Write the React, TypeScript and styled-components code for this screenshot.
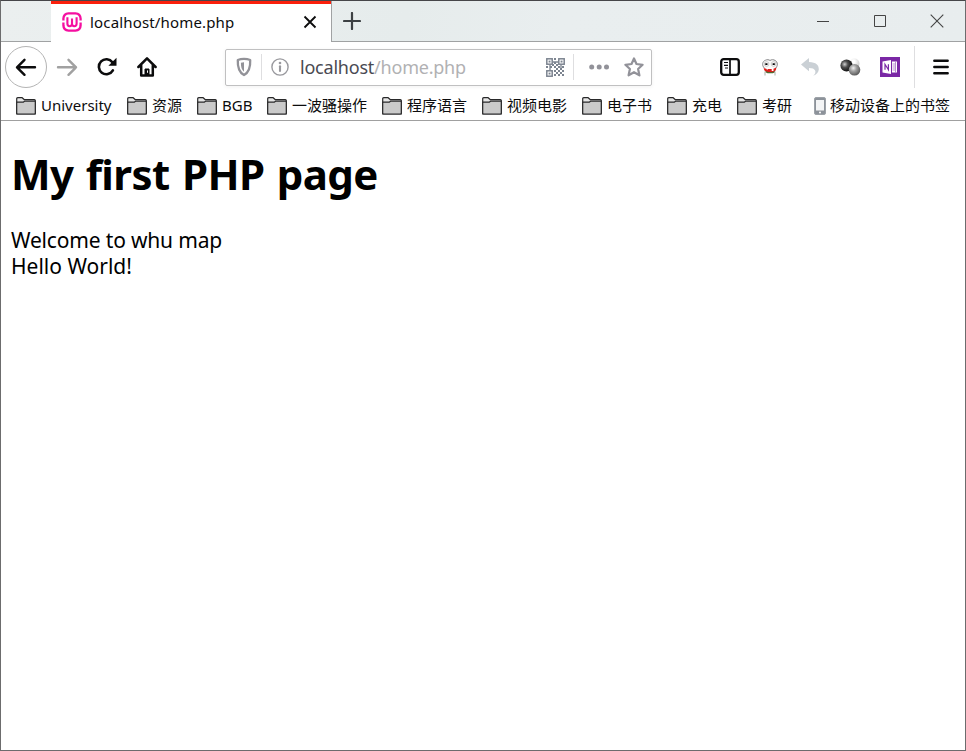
import React from "react";
import styled, { createGlobalStyle } from "styled-components";

const GlobalStyle = createGlobalStyle`
  * { box-sizing: border-box; }
  body {
    margin: 0;
    background: #fff;
    font-family: "Noto Sans", "Noto Sans CJK SC", sans-serif;
    overflow: hidden;
  }
  svg { display: block; flex: none; }
`;

const BrowserWindow = styled.div`
  width: 966px;
  height: 751px;
  display: flex;
  flex-direction: column;
  background: #fff;
  border: 1px solid #6c6c6d;
  border-top-color: #464649;
`;

const TitleBar = styled.header`
  height: 41px;
  flex: none;
  display: flex;
  background: linear-gradient(100deg, #ebefef 0%, #e6ecec 42%, #e9eeef 58%, #e8edee 100%);
`;

const TabGap = styled.div`
  width: 50px;
  border-bottom: 1px solid #a0a2a3;
`;

const Tab = styled.div`
  width: 280px;
  display: flex;
  align-items: center;
  padding: 0 12px 3px 11px;
  background: #fff;
  border-top: 3px solid #fa200c;
`;

const TabTitle = styled.span`
  width: 213px;
  flex: none;
  margin-left: 8px;
  font-size: 15px;
  line-height: 20px;
  letter-spacing: 0.16px;
  color: #0c0c0d;
  white-space: nowrap;
`;

const TabStripRest = styled.div`
  flex: 1;
  display: flex;
  align-items: center;
  justify-content: space-between;
  padding-left: 11px;
  border-bottom: 1px solid #a0a2a3;
  border-left: 1px solid #a0a2a3;
`;

const WindowControls = styled.div`
  display: flex;
  height: 100%;
`;

const WindowButton = styled.div`
  width: 57px;
  display: flex;
  align-items: center;
  justify-content: center;
`;

const NavBar = styled.nav`
  height: 50px;
  flex: none;
  display: flex;
  align-items: center;
  padding-left: 4px;
`;

const BackButton = styled.div`
  width: 42px;
  height: 42px;
  display: grid;
  place-items: center;
  border: 1px solid #b4b4b4;
  border-radius: 50%;
`;

const NavButton = styled.div`
  width: 40px;
  height: 40px;
  display: grid;
  place-items: center;
`;

const AddressBar = styled.div`
  width: 427px;
  height: 37px;
  margin: 0 58px;
  display: flex;
  align-items: center;
  padding-left: 8px;
  border: 1px solid #c0c0c1;
  border-radius: 2px;
  box-shadow: 0 1px 4px rgba(0, 0, 0, 0.06);
`;

const Divider = styled.i<{ $height: number; $left: number; $right: number }>`
  width: 1px;
  flex: none;
  height: ${(p) => p.$height}px;
  margin: 0 ${(p) => p.$right}px 0 ${(p) => p.$left}px;
  background: #dedee0;
`;

const PageActions = styled.div`
  display: flex;
  align-items: center;
  gap: 15px;
`;

const Address = styled.span`
  width: 246px;
  flex: none;
  margin-left: 11px;
  font-size: 18px;
  line-height: 24px;
  letter-spacing: -0.22px;
  color: #b1b1b3;
  white-space: nowrap;

  b { font-weight: 400; color: #4a4a52; }
`;

const BookmarksBar = styled.div`
  height: 29px;
  flex: none;
  display: flex;
  align-items: center;
  padding-left: 15px;
  border-bottom: 1px solid #a0a0a0;
`;

const Bookmark = styled.div<{ $width: number; $gap?: number }>`
  width: ${(p) => p.$width}px;
  height: 20px;
  flex: none;
  display: flex;
  align-items: center;
  gap: ${(p) => p.$gap ?? 5}px;
  color: #0c0c0d;

  svg { margin-bottom: 1px; }
`;

const BookmarkLabel = styled.span`
  padding-bottom: 2px;
  font-size: 15px;
  line-height: 20px;
  white-space: nowrap;
`;

const Page = styled.main`
  padding: 24px 10px;
  color: #000;
`;

const Heading = styled.h1`
  margin: 0;
  font-size: 42px;
  line-height: 58px;
  font-weight: 700;
  letter-spacing: -0.6px;
  word-spacing: 2px;
`;

const Paragraph = styled.p<{ $spacing?: number }>`
  margin: 0;
  font-size: 21px;
  line-height: 26px;
  letter-spacing: ${(p) => p.$spacing ?? 0}px;

  ${Heading} + & { margin-top: 24px; }
`;

const WampLogo = () => (
  <svg width="20" height="20" viewBox="0 0 20 20" fill="none" stroke="#f50fa0">
    <path d="M1.4 8.4V6.5Q1.6 1.6 6.6 1.3h6.8q5 .3 5.2 5.2v1.9M1.4 10.6v2.8q.2 5 5.2 5.3h6.8q5-.3 5.2-5.3v-2.8" strokeWidth="2.3" />
    <path d="M5.4 5.2v6.6q0 2.4 2.3 2.4T10 11.8V6.5M10 11.8q0 2.4 2.3 2.4t2.3-2.4V5.2" strokeWidth="2.1" />
  </svg>
);

const CloseTab = () => (
  <svg width="14" height="14" viewBox="0 0 14 14" stroke="#0c0c0d" strokeWidth="1.8">
    <path d="M1.5 1.5l11 11M12.5 1.5l-11 11" />
  </svg>
);

const Plus = () => (
  <svg width="18" height="18" viewBox="0 0 18 18" stroke="#3c4043" strokeWidth="2.2" strokeLinecap="round">
    <path d="M9 1v16M1 9h16" />
  </svg>
);

const Arrow = ({ forward = false }: { forward?: boolean }) => (
  <svg width="22" height="20" viewBox="0 0 22 20" fill="none" stroke={forward ? "#a1a1a1" : "#0c0c0d"} strokeWidth="2.4" strokeLinecap="round" strokeLinejoin="round">
    <path d={forward ? "M2 10.3h18M12.5 2.8l7.5 7.5-7.5 7.5" : "M20 10.3H2.5M9.5 2.8L2 10.3l7.5 7.5"} />
  </svg>
);

const Reload = () => (
  <svg width="20" height="20" viewBox="0 0 20 20" fill="none" stroke="#0c0c0d" strokeWidth="2.6">
    <path d="M15.9 13.4A7.5 7.5 0 1 1 15.4 5.3" strokeLinecap="round" />
    <path d="M19.5 .7v8.1h-8.1z" fill="#0c0c0d" stroke="none" />
  </svg>
);

const Home = () => (
  <svg width="20" height="20" viewBox="0 0 20 20" fill="none" stroke="#0c0c0d" strokeWidth="2.5" strokeLinecap="round" strokeLinejoin="round">
    <path d="M1.4 10L10 1.4l8.6 8.6M4.2 8.5v10.1h11.6V8.5" />
    <path d="M8 18v-6h4v6z" fill="#0c0c0d" strokeWidth="1" />
    <path d="M10.5 13.8v1.6" stroke="#fff" strokeWidth="1" />
  </svg>
);

const Shield = () => (
  <svg width="20" height="20" viewBox="0 0 20 20">
    <path d="M10 1.9q3.4 0 6.2 1.1c.3 5.7-.1 11.6-6.2 15.1C3.9 14.6 3.5 8.7 3.8 3Q6.6 1.9 10 1.9z" fill="none" stroke="#929298" strokeWidth="2.3" strokeLinejoin="round" />
    <path d="M10 5.3v9.5C7.4 12.7 6.9 9.6 6.9 5.8Q8.3 5.3 10 5.3z" fill="#929298" />
  </svg>
);

const Info = () => (
  <svg width="18" height="18" viewBox="0 0 18 18" fill="none" stroke="#99999e">
    <circle cx="9" cy="9" r="8.1" strokeWidth="1.4" />
    <path d="M9 8.3v4.7" strokeWidth="2.1" strokeLinecap="round" />
    <circle cx="9" cy="5" r="1.3" fill="#99999e" stroke="none" />
  </svg>
);

const qrCells: [number, number][] = [
  [9, 1], [9, 5], [1, 9], [5, 9], [9, 9], [13, 9], [17, 9], [11, 7], [7, 7],
  [11, 11], [15, 11], [9, 13], [13, 13], [17, 13], [11, 15], [15, 15], [13, 17], [17, 17], [9, 17],
];

const QrCode = () => (
  <svg width="19" height="19" viewBox="0 0 19 19">
    {[[0, 0], [12, 0], [0, 12]].map(([x, y]) => (
      <g key={`${x}-${y}`}>
        <rect x={x + 0.8} y={y + 0.8} width="5.4" height="5.4" fill="none" stroke="#7c8490" strokeWidth="1.5" />
        <rect x={x + 2.6} y={y + 2.6} width="1.9" height="1.9" fill="#7c8490" />
      </g>
    ))}
    {qrCells.map(([x, y]) => (
      <rect key={`${x}-${y}`} x={x - 1} y={y - 1} width="2" height="2" fill="#7c8490" />
    ))}
    <path d="M7 4h5M4 7v5M15 7v4" stroke="#7c8490" strokeWidth="1.3" />
  </svg>
);

const Dots = () => (
  <svg width="20" height="6" viewBox="0 0 20 6" fill="#929299">
    <circle cx="2.7" cy="3" r="2.5" />
    <circle cx="10.2" cy="3" r="2.5" />
    <circle cx="17.5" cy="3" r="2.5" />
  </svg>
);

const Star = () => (
  <svg width="20" height="20" viewBox="0 0 20 20" fill="none" stroke="#929299" strokeWidth="2.2" strokeLinejoin="round">
    <path d="M10 1.5l2.5 5.5 6.1.8-4.5 4.2 1.3 6.3L10 15.2l-5.4 3.1L5.9 12 1.4 7.800l6.1-.8z" />
  </svg>
);

const Sidebar = () => (
  <svg width="20" height="18" viewBox="0 0 20 18" fill="none" stroke="#0c0c0d">
    <rect x="1.2" y="1.2" width="17.6" height="15.6" rx="2.5" strokeWidth="2.3" />
    <path d="M10 1v16" strokeWidth="1.7" />
    <path d="M4 4.5h4M4 7.3h4M5 10h3" strokeWidth="1.2" />
  </svg>
);

const Face = () => (
  <svg width="16" height="17" viewBox="0 0 16 17" fill="none">
    <path d="M2.3 9C-.4 6.3.3 2.3 3.5 1.2 5 .4 7 .6 8 1.5 9.3.4 11.8.5 13.2 1.5c2.700 1.5 2.700 5.5.6 7.5" fill="#fafafa" stroke="#858587" />
    <circle cx="4.6" cy="5" r="2.3" fill="#fff" stroke="#aaa" strokeWidth=".6" />
    <circle cx="11.5" cy="5" r="2.3" fill="#fff" stroke="#aaa" strokeWidth=".6" />
    <path d="M3.3 4.3h2.2v1.8H3.3zM10.6 4.3h2.2v1.8h-2.2z" fill="#070707" />
    <path d="M1.7 9l3.3 1h6L14.3 8.6q0 3.7-3 4.9H5.6Q2 12.5 1.7 9z" fill="#dc1d19" />
    <path d="M4 9.7l1.5.3.2 1.3zM9.700 10h1.8v2H9.700z" fill="#fff" />
    <path d="M3.7 12.6l2 1h5l2-1" stroke="#536b32" strokeWidth="1.2" />
    <path d="M3 12.5v4M13 12.5v4" stroke="#a7b0aa" />
  </svg>
);

const Undo = () => (
  <svg width="18" height="18" viewBox="0 0 18 18">
    <path d="M0 6.5L8 0v4c7.2.2 10 3.2 9.8 7.6-.2 3-2.4 5.2-5.6 6.2 2-1.6 2.7-3.5 1.9-5.2C13.3 10.6 11.4 9.9 8 9.9v3.3z" fill="#cad0d5" />
  </svg>
);

const Spheres = () => (
  <svg width="21" height="18" viewBox="0 0 21 18">
    <defs>
      <radialGradient id="sphere-light" cx=".4" cy=".3" r=".7">
        <stop offset=".2" stopColor="#fff" />
        <stop offset="1" stopColor="#c9c9c9" />
      </radialGradient>
      <radialGradient id="sphere-mid" cx=".4" cy=".35" r=".7">
        <stop stopColor="#f1f1f1" />
        <stop offset=".4" stopColor="#a0a0a0" />
        <stop offset="1" stopColor="#505050" />
      </radialGradient>
      <radialGradient id="sphere-dark" cx=".35" cy=".4" r=".65">
        <stop stopColor="#d0d0d0" />
        <stop offset=".4" stopColor="#505050" />
        <stop offset="1" stopColor="#080808" />
      </radialGradient>
    </defs>
    <circle cx="14.5" cy="5.5" r="5" fill="url(#sphere-light)" />
    <circle cx="6.5" cy="7.5" r="6.1" fill="url(#sphere-dark)" />
    <circle cx="14.5" cy="11.8" r="5.8" fill="url(#sphere-mid)" />
  </svg>
);

const OneNote = () => (
  <svg width="20" height="20" viewBox="0 0 20 20">
    <path d="M0 0h20v20H0z" fill="#7a28a5" />
    <path d="M12 4.5h5v11h-5z" fill="#fff" />
    <path d="M12.5 7h2.5M12.5 9h2.5M12.5 11h2.5M12.5 13h2.5M15.5 4.5v11" stroke="#a875c4" strokeWidth=".8" />
    <path d="M2.5 4.5L11 3v14l-8.5-1.5z" fill="#fff" />
    <path d="M5 12.7V7.3l3.4 5.4V7.3" fill="none" stroke="#7a28a5" strokeWidth="1.2" />
  </svg>
);

const Menu = () => (
  <svg width="16" height="16" viewBox="0 0 16 16" stroke="#0c0c0d" strokeWidth="2.4" strokeLinecap="round">
    <path d="M1.3 1.8h13.4M1.3 8h13.4M1.3 14.2h13.4" />
  </svg>
);

const Folder = () => (
  <svg width="20" height="18" viewBox="0 0 20 18" stroke="#29292a" strokeWidth="1.2" strokeLinejoin="round">
    <path d="M.7 17V1.7Q.7.7 1.7.7h4.5l2.2 2h10q.9 0 .9 1V17z" fill="#e6e6e6" />
    <path d="M.7 5.2h6.5l1.3-1h10.800V16q0 1-.9 1H1.6q-.9 0-.9-1z" fill="#cacaca" />
  </svg>
);

const Phone = () => (
  <svg width="12" height="18" viewBox="0 0 12 18">
    <rect x=".5" y=".5" width="11" height="17" rx="1.5" fill="#8c929a" stroke="#9da2a8" />
    <path d="M2 3h8v10.5H2z" fill="#f4f5f6" />
    <circle cx="6" cy="15.5" r="1" fill="#fff" />
  </svg>
);

const folders = [
  { label: "University", width: 111 },
  { label: "资源", width: 70 },
  { label: "BGB", width: 70 },
  { label: "一波骚操作", width: 115 },
  { label: "程序语言", width: 100 },
  { label: "视频电影", width: 100 },
  { label: "电子书", width: 85 },
  { label: "充电", width: 70 },
  { label: "考研", width: 77 },
];

export default function App() {
  return (
    <>
      <GlobalStyle />
      <BrowserWindow>
        <TitleBar>
          <TabGap />
          <Tab>
            <WampLogo />
            <TabTitle>localhost/home.php</TabTitle>
            <CloseTab />
          </Tab>
          <TabStripRest>
            <Plus />
            <WindowControls>
              <WindowButton>
                <svg width="12" height="1"><path d="M0 .5h12" stroke="#444" /></svg>
              </WindowButton>
              <WindowButton>
                <svg width="12" height="12"><path d="M.5.5h11v11H.5z" fill="none" stroke="#444" /></svg>
              </WindowButton>
              <WindowButton>
                <svg width="14" height="14"><path d="M.7.7l12.6 12.6M13.3.7L.7 13.3" stroke="#444" strokeWidth="1.1" /></svg>
              </WindowButton>
            </WindowControls>
          </TabStripRest>
        </TitleBar>
        <NavBar>
          <BackButton><Arrow /></BackButton>
          <NavButton><Arrow forward /></NavButton>
          <NavButton><Reload /></NavButton>
          <NavButton><Home /></NavButton>
          <AddressBar>
            <Shield />
            <Divider $height={26} $left={7} $right={9} />
            <Info />
            <Address><b>localhost</b>/home.php</Address>
            <QrCode />
            <Divider $height={26} $left={8} $right={15} />
            <PageActions>
              <Dots />
              <Star />
            </PageActions>
          </AddressBar>
          <NavButton><Sidebar /></NavButton>
          <NavButton><Face /></NavButton>
          <NavButton><Undo /></NavButton>
          <NavButton><Spheres /></NavButton>
          <NavButton><OneNote /></NavButton>
          <Divider $height={42} $left={4} $right={18} />
          <Menu />
        </NavBar>
        <BookmarksBar>
          {folders.map(({ label, width }) => (
            <Bookmark key={label} $width={width}>
              <Folder />
              <BookmarkLabel>{label}</BookmarkLabel>
            </Bookmark>
          ))}
          <Bookmark $width={140} $gap={4}>
            <Phone />
            <BookmarkLabel>移动设备上的书签</BookmarkLabel>
          </Bookmark>
        </BookmarksBar>
        <Page>
          <Heading>My first PHP page</Heading>
          <Paragraph $spacing={-0.17}>Welcome to whu map</Paragraph>
          <Paragraph>Hello World!</Paragraph>
        </Page>
      </BrowserWindow>
    </>
  );
}
